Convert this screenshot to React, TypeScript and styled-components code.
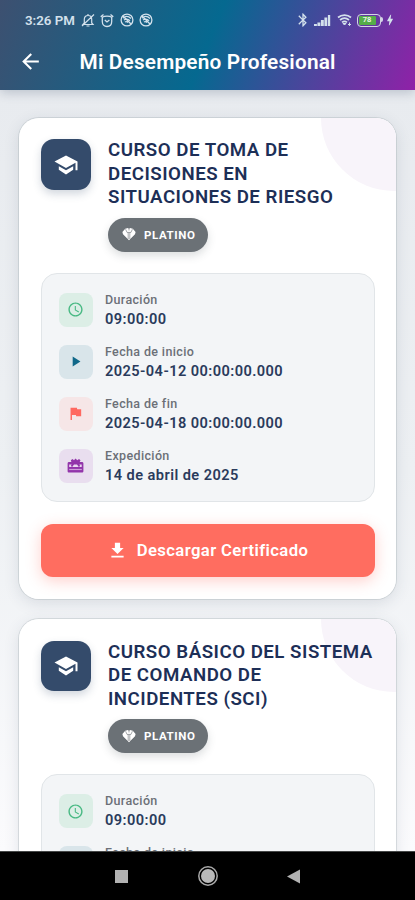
import React from "react";
import styled, { createGlobalStyle } from "styled-components";
import {
  MdAccessTime,
  MdArrowBack,
  MdBluetooth,
  MdBolt,
  MdFileDownload,
  MdFlag,
  MdPlayArrow,
} from "react-icons/md";

const GlobalStyle = createGlobalStyle`
  * { box-sizing: border-box; }
  body { margin: 0; font-family: Roboto, "Liberation Sans", sans-serif; }
`;

const Screen = styled.main`
  width: 415px;
  height: 900px;
  display: flex;
  flex-direction: column;
  overflow: hidden;
  background: #000;
`;

const Header = styled.header`
  height: 90px;
  flex: none;
  position: relative;
  z-index: 2;
  color: #fff;
  background: linear-gradient(112deg, #3d5070 0%, #056990 50%, #9021a8 100%);
  box-shadow: 0 3px 10px rgba(45, 65, 95, 0.23);
`;

const StatusBar = styled.div`
  height: 40px;
  padding: 0 18px 0 25px;
  display: flex;
  align-items: center;
  color: #d3e1ec;
`;

const Time = styled.span`
  width: 50px;
  margin-right: 6px;
  font-size: 13.3px;
  font-weight: 600;
  white-space: nowrap;
`;

const StatusIcons = styled.div<{ $gap: number; $end?: boolean }>`
  display: flex;
  align-items: center;
  gap: ${(p) => p.$gap}px;
  margin-left: ${(p) => (p.$end ? "auto" : "0")};
  svg { display: block; flex: none; }
`;

const TitleBar = styled.div`
  height: 43px;
  padding-left: 17.5px;
  display: flex;
  align-items: center;
`;

const BackButton = styled.button`
  width: 62px;
  padding: 0;
  border: 0;
  background: none;
  color: #fff;
  text-align: left;
  svg { display: block; }
`;

const PageTitle = styled.h1`
  margin: 0;
  font-size: 20.8px;
  line-height: 26px;
  font-weight: 600;
  letter-spacing: 0.19px;
  white-space: nowrap;
`;

const Content = styled.div`
  flex: 1;
  min-height: 0;
  overflow: hidden;
  padding: 28px 19px 0 19px;
  display: flex;
  flex-direction: column;
  gap: 20px;
  background: linear-gradient(180deg, #e8ebef 0%, #edf0f3 50%, #fbfbfd 100%);
`;

const Card = styled.article`
  height: 481.3px;
  position: relative;
  overflow: hidden;
  padding: 21.4px 21px 21.4px 21.5px;
  border-radius: 20px;
  background: #fff;
`;

const CardShell = styled.div`
  flex: none;
  border-radius: 20px;
  box-shadow: 0 0 0 1px rgba(160, 170, 175, 0.32), 0 4px 16px rgba(45, 65, 85, 0.13);
`;

const Corner = styled.div`
  position: absolute;
  top: -73px;
  right: -71px;
  width: 146px;
  height: 146px;
  border-radius: 50%;
  background: #f8f4fa;
`;

const CardHead = styled.div`
  position: relative;
  display: flex;
  gap: 17px;
  height: 133.6px;
`;

const SchoolTile = styled.div`
  width: 50.5px;
  height: 50.5px;
  flex: none;
  display: grid;
  place-items: center;
  border-radius: 13px;
  color: #fff;
  background: #344b6b;
  box-shadow: 0 4px 9px rgba(52, 75, 107, 0.22);
`;

const CourseTitle = styled.h2`
  margin: 0 0 8.5px;
  color: #1d2f57;
  font-size: 18.7px;
  line-height: 23.4px;
  font-weight: 600;
  letter-spacing: 0.5px;
  white-space: nowrap;
`;

const Level = styled.div`
  width: 100px;
  height: 33.5px;
  display: flex;
  align-items: center;
  gap: 8px;
  padding-left: 14px;
  border-radius: 17px;
  color: #fff;
  background: #6b7176;
  box-shadow: 0 4px 8px rgba(65, 75, 85, 0.18);
  font-size: 11.5px;
  font-weight: 700;
  letter-spacing: 0.6px;
`;

const Details = styled.div`
  height: 229.4px;
  padding: 19px 17px;
  display: flex;
  flex-direction: column;
  gap: 17.9px;
  border: 1px solid #e1e5e8;
  border-radius: 16px;
  background: #f3f5f7;
`;

const DetailRow = styled.div`
  display: flex;
  gap: 12.5px;
  height: 34px;
`;

const DetailIcon = styled.div<{ $fg: string; $bg: string }>`
  width: 34px;
  height: 34px;
  flex: none;
  display: grid;
  place-items: center;
  border-radius: 8px;
  color: ${(p) => p.$fg};
  background: ${(p) => p.$bg};
`;

const DetailText = styled.div`
  display: flex;
  flex-direction: column;
  white-space: nowrap;
`;

const Label = styled.span`
  margin-top: -2px;
  color: #6c7077;
  font-size: 12.5px;
  line-height: 17px;
  font-weight: 500;
  letter-spacing: 0.36px;
`;

const Value = styled.span`
  margin-top: 1px;
  color: #2a3b5c;
  font-size: 14.6px;
  line-height: 20px;
  font-weight: 600;
  letter-spacing: 0.43px;
`;

const DownloadButton = styled.button`
  width: 100%;
  height: 53px;
  margin-top: 21.5px;
  padding: 1px 0 0 0;
  display: flex;
  align-items: center;
  justify-content: center;
  gap: 8.5px;
  border: 0;
  border-radius: 12px;
  color: #fff;
  background: #ff6d60;
  box-shadow: 0 4px 15px rgba(255, 109, 96, 0.32);
  font: 600 16.7px/22px Roboto, "Liberation Sans", sans-serif;
  letter-spacing: 0.38px;
  white-space: nowrap;
`;

const NavBar = styled.nav`
  height: 49px;
  flex: none;
  display: flex;
  align-items: center;
  justify-content: space-between;
  padding: 0 114px 0 114px;
  border-top: 1px solid #454747;
  background: #000;
`;

function MutedBell() {
  return (
    <svg width="14" height="15" viewBox="0 0 14 15" fill="none" stroke="currentColor" strokeWidth="1.2">
      <path d="M2 11.5h10L10.7 10V6.3C10.7 3.8 9.2 2.5 7 2.5S3.3 3.8 3.3 6.3V10L2 11.5ZM5.5 13h3M1 13 13 1.5M7 1v1.5" />
    </svg>
  );
}

function Alarm() {
  return (
    <svg width="14" height="15" viewBox="0 0 14 15" fill="none" stroke="currentColor" strokeWidth="1.3">
      <path d="M2.3 4.2C4.5 2.8 9.5 2.8 11.7 4.2V8.5c0 3-1.8 5-4.7 5s-4.7-2-4.7-5V4.2ZM.7 3.8 3.5 1.5M13.3 3.8l-2.8-2.3M4.8 7 7 9l2.4-2" />
    </svg>
  );
}

function BlockedSignal() {
  return (
    <svg width="14" height="14" viewBox="0 0 14 14" fill="none" stroke="currentColor" strokeWidth="1.3">
      <circle cx="7" cy="7" r="5.9" />
      <path d="M3 5c2.4-2 5.7-1.8 8 .5M4 7c2-1.3 4.2-1 6 .8M3 3l8 8M5 9c1-.7 2-.5 3 .4" />
    </svg>
  );
}

function Signal() {
  return (
    <svg width="17" height="13" viewBox="0 0 17 13" fill="currentColor">
      <path d="M0 10h2.9v2H0zM3.4 8.5h2.9V12H3.4zM6.9 6h2.9v6H6.9zM10.4 3.5h2.8V12h-2.8zM13.9 1h2.3v11h-2.3z" />
    </svg>
  );
}

function Wifi() {
  return (
    <svg width="16" height="14" viewBox="0 0 16 14" fill="none" stroke="currentColor" strokeWidth="1.7">
      <path d="M1 4.5c3.8-3.3 9.3-3.3 13 0M3 7c2.7-2.2 6.3-2.2 9 0M5 9.3c1.5-1.2 3.5-1.2 5 0" />
      <path d="M6 10.5h3L7.5 12zM12.5 9.5v3M11 11l1.5 1.5L14 11" fill="currentColor" strokeWidth="1" />
    </svg>
  );
}

const BatteryShell = styled.div`
  width: 24.5px;
  height: 13px;
  margin: 0 -1px 0 1px;
  position: relative;
  display: flex;
  padding: 1px;
  border: 1.5px solid #d5d5e6;
  border-radius: 4px;
  &::after {
    content: "";
    position: absolute;
    left: 23px;
    top: 2.5px;
    width: 2.5px;
    height: 5px;
    border-radius: 0 3px 3px 0;
    background: #d5d5e6;
  }
`;

const Charge = styled.div`
  width: 17px;
  display: grid;
  place-items: center;
  border-radius: 1px;
  color: #edf5e9;
  background: #55ad48;
  font-size: 7.5px;
  line-height: 8px;
  font-weight: 700;
`;

function GraduationCap() {
  return (
    <svg width="26" height="24" viewBox="0 0 26 24" fill="currentColor">
      <path d="M13 2.5 1.5 8.6 13 15l9.5-5.2v7.4h2V8.6Z" />
      <path d="M5.8 13.2v3.6L13 21.5l7.2-4.7v-3.6L13 17.3Z" />
    </svg>
  );
}

function Gem() {
  return (
    <svg width="14" height="13" viewBox="0 0 14 13">
      <path d="M3.2.8 6 0l1 .9L8 0l2.8.8L13.6 4 13 6.2 7 12.3 1 6.2.4 4Z" fill="currentColor" />
      <path d="M3.6 1.2 5 4.4h4l1.4-3.2M6.2 4.4V11M7.8 4.4V11M7 .5v2" fill="none" stroke="#6b7176" strokeWidth=".6" />
    </svg>
  );
}

function GiftCard() {
  return (
    <svg width="17" height="16" viewBox="0 0 17 16">
      <path d="M2 4h2.4L3.8 2.3 5.5 1 7 2.3 8.5.5l1.8 1.8L12 1l1.5 1.3-.8 1.7H15c.8 0 1.4.6 1.4 1.4v7.8c0 .8-.6 1.4-1.4 1.4H2c-.8 0-1.4-.6-1.4-1.4V5.4C.6 4.6 1.2 4 2 4Z" fill="#9235aa" />
      <path d="M2.2 9V6.4h2.5L3.8 8l1.4 1L7 6.4h3L11.8 9l1.4-1-.9-1.6h2.4V9Z" fill="#ead9f0" />
      <path d="M2.2 11.5h12.6" stroke="#ce9cda" strokeWidth="1.2" />
    </svg>
  );
}

const details = [
  { label: "Duración", value: "09:00:00", fg: "#48b983", bg: "#dceee6", icon: <MdAccessTime size={17} /> },
  { label: "Fecha de inicio", value: "2025-04-12 00:00:00.000", fg: "#106889", bg: "#d9e5ea", icon: <MdPlayArrow size={17} /> },
  { label: "Fecha de fin", value: "2025-04-18 00:00:00.000", fg: "#ff6961", bg: "#f6e6e7", icon: <MdFlag size={17} /> },
  { label: "Expedición", value: "14 de abril de 2025", fg: "#9235aa", bg: "#e9deef", icon: <GiftCard /> },
];

function CourseCard({ lines }: { lines: string[] }) {
  return (
    <CardShell>
      <Card>
        <Corner />
        <CardHead>
          <SchoolTile><GraduationCap /></SchoolTile>
          <div>
            <CourseTitle>
              {lines.map((line, i) => <React.Fragment key={line}>{i > 0 && <br />}{line}</React.Fragment>)}
            </CourseTitle>
            <Level><Gem />PLATINO</Level>
          </div>
        </CardHead>
        <Details>
          {details.map((item) => (
            <DetailRow key={item.label}>
              <DetailIcon $fg={item.fg} $bg={item.bg}>{item.icon}</DetailIcon>
              <DetailText><Label>{item.label}</Label><Value>{item.value}</Value></DetailText>
            </DetailRow>
          ))}
        </Details>
        <DownloadButton><MdFileDownload size={21} />Descargar Certificado</DownloadButton>
      </Card>
    </CardShell>
  );
}

export default function App() {
  return (
    <>
      <GlobalStyle />
      <Screen>
        <Header>
          <StatusBar>
            <Time>3:26 PM</Time>
            <StatusIcons $gap={5.3}><MutedBell /><Alarm /><BlockedSignal /><BlockedSignal /></StatusIcons>
            <StatusIcons $gap={3} $end>
              <MdBluetooth size={16} />
              <Signal />
              <span />
              <Wifi />
              <BatteryShell><Charge>78</Charge></BatteryShell>
              <MdBolt size={14} />
            </StatusIcons>
          </StatusBar>
          <TitleBar>
            <BackButton aria-label="Volver"><MdArrowBack size={25} /></BackButton>
            <PageTitle>Mi Desempeño Profesional</PageTitle>
          </TitleBar>
        </Header>
        <Content>
          <CourseCard lines={["CURSO DE TOMA DE", "DECISIONES EN", "SITUACIONES DE RIESGO"]} />
          <CourseCard lines={["CURSO BÁSICO DEL SISTEMA", "DE COMANDO DE", "INCIDENTES (SCI)"]} />
        </Content>
        <NavBar>
          <svg width="15" height="15" viewBox="0 0 15 15"><path d="M1 1h13v13H1z" fill="#b2b2b2" /></svg>
          <svg width="22" height="22" viewBox="0 0 22 22"><circle cx="11" cy="11" r="9.2" fill="none" stroke="#aaa" strokeWidth="1.5" /><circle cx="11" cy="11" r="7" fill="#b9b9b9" /></svg>
          <svg width="15" height="15" viewBox="0 0 15 15"><path d="M14 .5v14L1 7.5Z" fill="#b2b2b2" /></svg>
        </NavBar>
      </Screen>
    </>
  );
}
